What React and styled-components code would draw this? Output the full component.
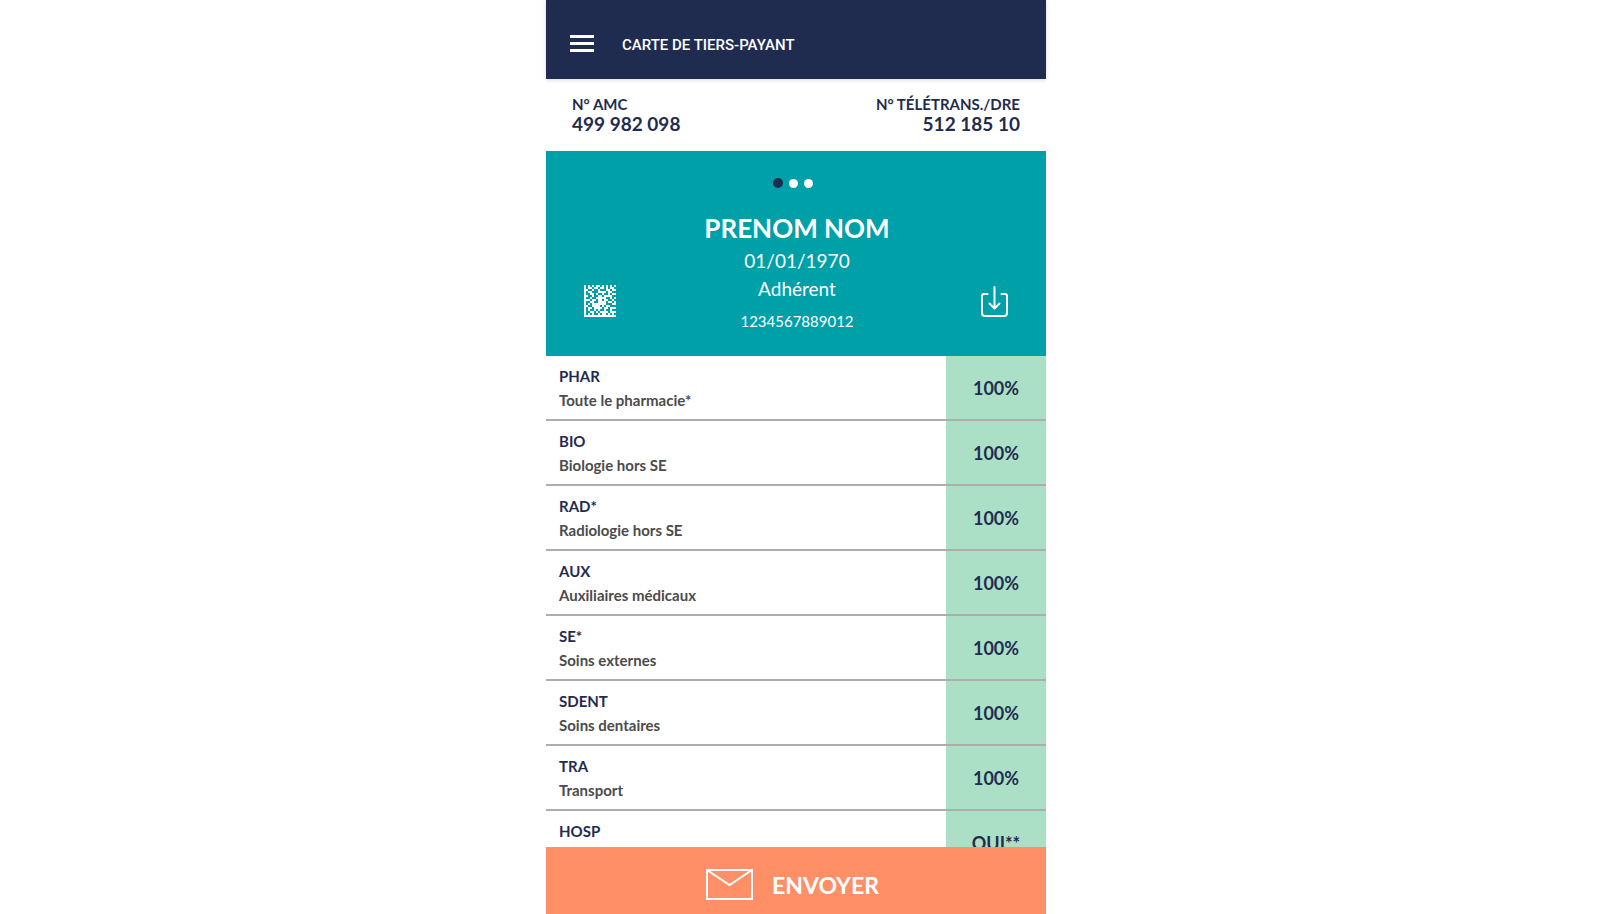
import React from "react"
import styled, { createGlobalStyle } from "styled-components"

const Colors = {
  Navy: "#1f2c50",
  Teal: "#00a0a8",
  Mint: "#ace0c6",
  Coral: "#ff8f66",
  Text: "#4b4b4b",
  Line: "#adadad",
}

const GlobalStyle = createGlobalStyle`
  * {
    box-sizing: border-box;
  }

  body {
    margin: 0;
    padding-right: 8px;
    background: #fff;
    color: ${Colors.Navy};
    font-family: Lato, "Liberation Sans", sans-serif;
  }

  button {
    padding: 0;
    border: 0;
    background: none;
    color: inherit;
    font: inherit;
    cursor: pointer;
  }
`

const Screen = styled.div`
  display: flex;
  flex-direction: column;
  width: 100%;
  max-width: 500px;
  height: 100vh;
  margin: 0 auto;
`

const Header = styled.header`
  display: flex;
  flex-shrink: 0;
  align-items: center;
  gap: 28px;
  padding: 31px 24px 20px;
  background: ${Colors.Navy};
  color: #fff;
  box-shadow: 0 1px 4px rgba(0, 0, 0, 0.15);
`

const MenuButton = styled.button`
  display: flex;
  flex-direction: column;
  gap: 4px;
  height: 28px;
  padding-top: 4px;

  span {
    width: 24px;
    height: 3px;
    background: #fff;
  }
`

const Title = styled.h1`
  margin: 0;
  font-family: Roboto, sans-serif;
  font-size: 15px;
  font-weight: 500;
  line-height: 28px;
`

const Numbers = styled.dl`
  display: flex;
  flex-shrink: 0;
  justify-content: space-between;
  margin: 0;
  padding: 15px 26px 17px;
`

const NumberItem = styled.div`
  text-align: ${({ $align }) => $align || "left"};

  dt {
    font-size: 15px;
    font-weight: 700;
    line-height: 20px;
  }

  dd {
    margin: 0;
    font-size: 19px;
    font-weight: 700;
    line-height: 20px;
  }
`

const Member = styled.section`
  display: grid;
  flex-shrink: 0;
  grid-template-columns: 32px 1fr 32px;
  grid-template-rows: auto auto;
  padding: 26px 36px 21px 38px;
  background: ${Colors.Teal};
  color: #fff;
`

const Dots = styled.div`
  display: flex;
  grid-column: 1 / -1;
  align-items: center;
  justify-content: center;
  gap: 6px;
  height: 12px;
  padding-right: 8px;
`

const Dot = styled.button`
  width: ${({ $active }) => ($active ? 10 : 9)}px;
  height: ${({ $active }) => ($active ? 10 : 9)}px;
  border-radius: 50%;
  background: ${({ $active }) => ($active ? Colors.Navy : "#fff")};
`

const IconButton = styled.button`
  align-self: end;
  height: 32px;
  margin-bottom: 18px;

  svg {
    display: block;
  }
`

const Identity = styled.div`
  padding-top: 21px;
  text-align: center;

  h2 {
    margin: 0;
    font-size: 26px;
    font-weight: 700;
    line-height: 37px;
  }

  p {
    margin: 0;
    font-size: 19px;
    line-height: 28px;
  }

  small {
    display: block;
    padding-top: 4px;
    font-size: 15px;
    line-height: 28px;
  }
`

const Coverage = styled.main`
  flex: 1;
  min-height: 0;
  overflow: hidden;
`

const Table = styled.table`
  width: 100%;
  border-collapse: separate;
  border-spacing: 0;
`

const Row = styled.tr`
  th,
  td {
    height: 65px;
    padding: 0;
    border-bottom: 2px solid ${Colors.Line};
  }
`

const Care = styled.th`
  text-align: left;
  vertical-align: top;
  font-size: 15px;
  font-weight: 700;
  line-height: 24px;
`

const Code = styled.div`
  padding: 8px 13px 0;
`

const Label = styled.div`
  padding: 0 13px;
  color: ${Colors.Text};
`

const Rate = styled.td`
  width: 20%;
  background: ${Colors.Mint};
  text-align: center;
  font-size: 18px;
  font-weight: 700;
`

const SendButton = styled.button`
  && {
    display: flex;
    flex-shrink: 0;
    align-items: center;
    justify-content: center;
    gap: 19px;
    height: 67px;
    padding: 8px 7px 0 0;
    background: ${Colors.Coral};
    color: #fff;
    font-size: 23px;
    font-weight: 700;
  }
`

const rows = [
  { code: "PHAR", label: "Toute le pharmacie*", rate: "100%" },
  { code: "BIO", label: "Biologie hors SE", rate: "100%" },
  { code: "RAD*", label: "Radiologie hors SE", rate: "100%" },
  { code: "AUX", label: "Auxiliaires médicaux", rate: "100%" },
  { code: "SE*", label: "Soins externes", rate: "100%" },
  { code: "SDENT", label: "Soins dentaires", rate: "100%" },
  { code: "TRA", label: "Transport", rate: "100%" },
  { code: "HOSP", rate: "OUI**" },
]

const matrix = [
  "1010101101010101",
  "1011011011010110",
  "1100100100011011",
  "1011000111101100",
  "1001101001001011",
  "1100100110111100",
  "1001001111100101",
  "1110110110110010",
  "1001100111101101",
  "1010111111100011",
  "1100111101011000",
  "1011011110110111",
  "1010010100100100",
  "1001101011110111",
  "1010100101101010",
  "1111111111111111",
]

const MatrixIcon = () => (
  <svg width="32" height="32" viewBox="0 0 16 16" fill="#fff">
    {matrix.map((line, y) =>
      line
        .split("")
        .map((bit, x) =>
          bit === "1" ? (
            <rect key={`${x}-${y}`} x={x} y={y} width="1" height="1" />
          ) : null
        )
    )}
  </svg>
)

const DownloadIcon = () => (
  <svg
    width="32"
    height="32"
    viewBox="0 0 32 32"
    fill="none"
    stroke="#fff"
    strokeWidth="2"
    strokeLinecap="round"
    strokeLinejoin="round"
  >
    <path d="M9.500 9H6Q4 9 4 11V28Q4 31 7 31H26Q29 31 29 28V11Q29 9 27 9H23.500" />
    <path d="M16.500 2V23.500M11.500 18.500L16.500 23.500L21.500 18.500" />
  </svg>
)

const EnvelopeIcon = () => (
  <svg
    width="47"
    height="31"
    viewBox="0 0 47 31"
    fill="none"
    stroke="#fff"
    strokeWidth="2"
  >
    <path d="M1 1H46V30H1ZM1 1L23.500 16L46 1" />
  </svg>
)

const App = () => {
  return (
    <>
      <GlobalStyle />
      <Screen>
        <Header>
          <MenuButton aria-label="Menu">
            <span />
            <span />
            <span />
          </MenuButton>
          <Title>CARTE DE TIERS-PAYANT</Title>
        </Header>
        <Numbers>
          <NumberItem>
            <dt>N° AMC</dt>
            <dd>499 982 098</dd>
          </NumberItem>
          <NumberItem $align="right">
            <dt>N° TÉLÉTRANS./DRE</dt>
            <dd>512 185 10</dd>
          </NumberItem>
        </Numbers>
        <Member>
          <Dots>
            <Dot $active aria-label="Carte 1" />
            <Dot aria-label="Carte 2" />
            <Dot aria-label="Carte 3" />
          </Dots>
          <IconButton aria-label="Datamatrix">
            <MatrixIcon />
          </IconButton>
          <Identity>
            <h2>PRENOM NOM</h2>
            <p>01/01/1970</p>
            <p>Adhérent</p>
            <small>1234567889012</small>
          </Identity>
          <IconButton aria-label="Télécharger">
            <DownloadIcon />
          </IconButton>
        </Member>
        <Coverage>
          <Table>
            <tbody>
              {rows.map(({ code, label, rate }) => (
                <Row key={code}>
                  <Care scope="row">
                    <Code>{code}</Code>
                    {label && <Label>{label}</Label>}
                  </Care>
                  <Rate>{rate}</Rate>
                </Row>
              ))}
            </tbody>
          </Table>
        </Coverage>
        <SendButton>
          <EnvelopeIcon />
          ENVOYER
        </SendButton>
      </Screen>
    </>
  )
}

export default App
